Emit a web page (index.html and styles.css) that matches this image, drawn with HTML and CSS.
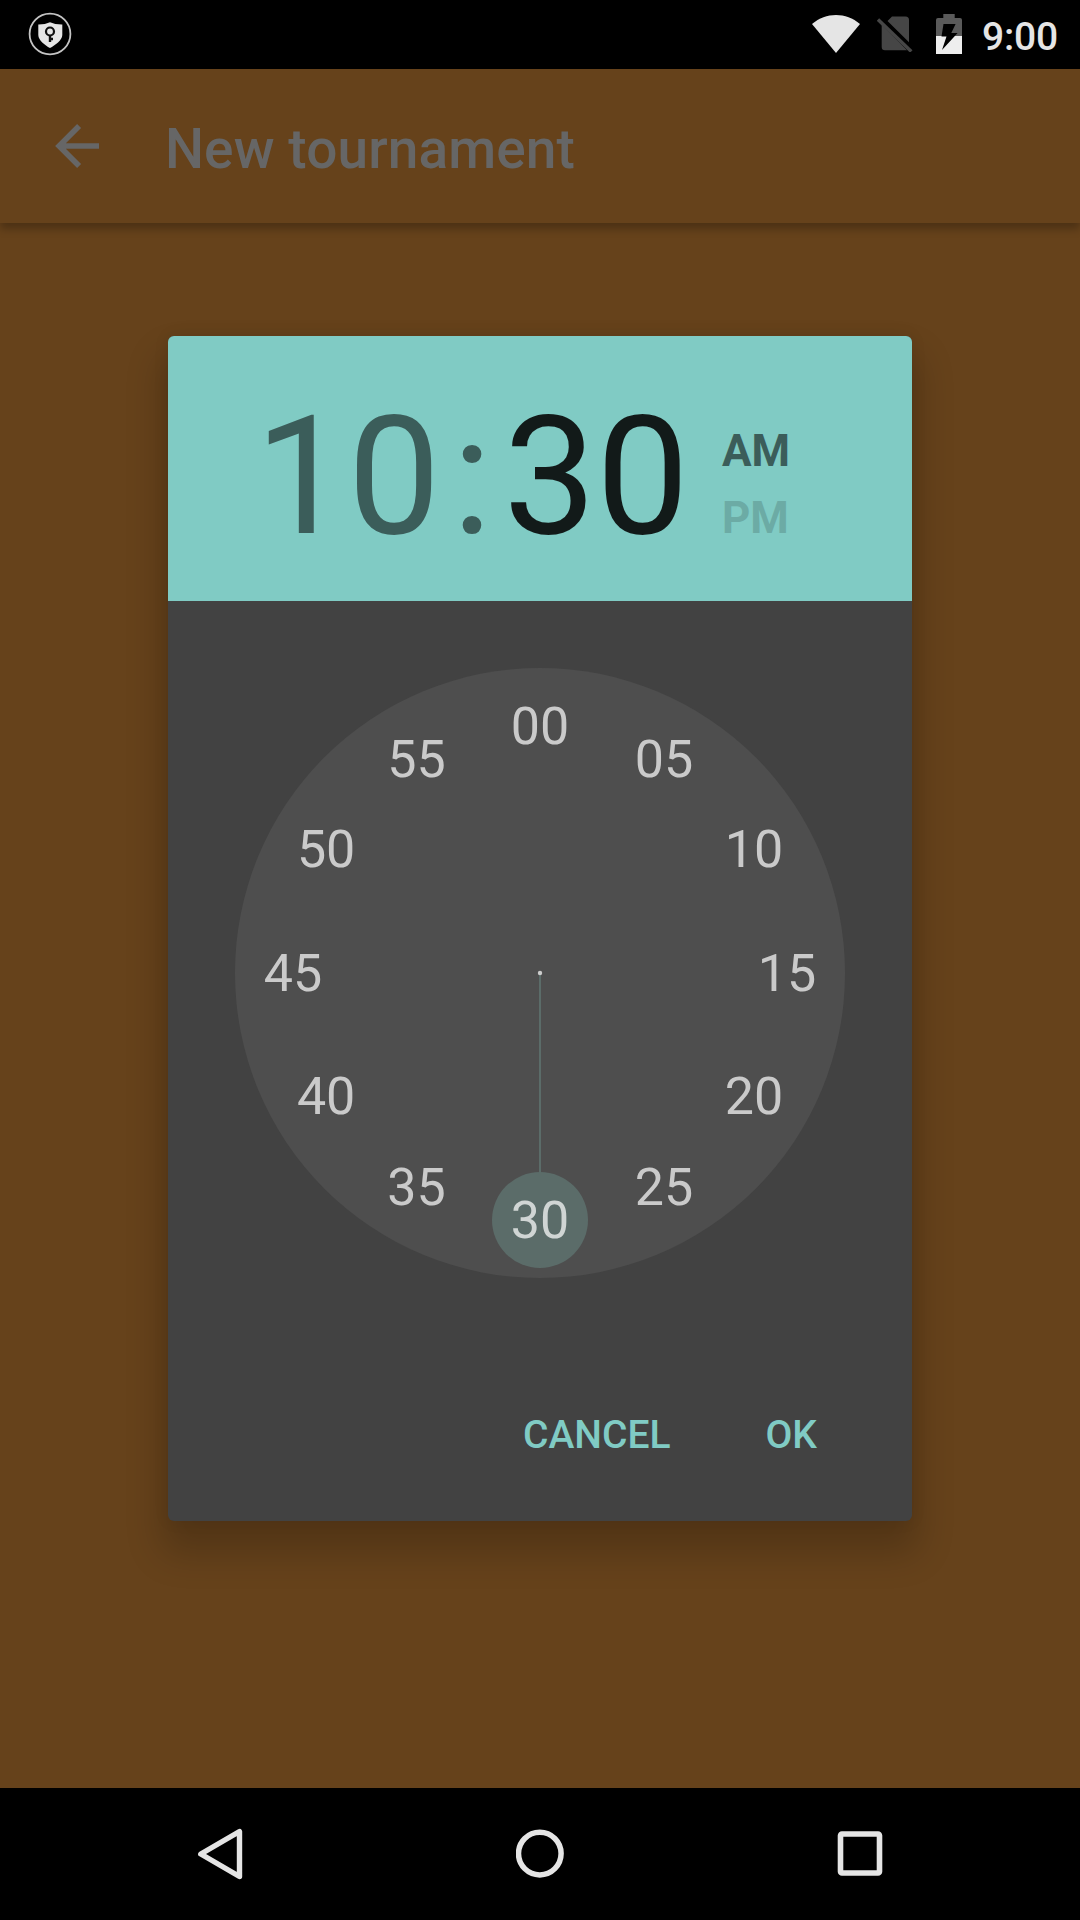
FILE: index.html
```html
<!DOCTYPE html>
<html lang="en">
<head>
<meta charset="utf-8">
<title>New tournament</title>
<link rel="stylesheet" href="styles.css">
</head>
<body>
<div class="screen">
  <header class="status">
    <svg class="vpn" width="44" height="44" viewBox="0 0 44 44">
      <circle cx="22" cy="22" r="20.4" fill="none" stroke="#c4c4c4" stroke-width="1.8"/>
      <path d="M10.3 12.6Q17 12.7 22 10.3Q27 12.7 34.3 12.6V23C34.3 28 27 33.500 22 36C17 33.500 10.300 28 10.300 23Z" fill="#e6e6e6"/>
      <circle cx="22" cy="19.500" r="4" fill="none" stroke="#111" stroke-width="2.200"/>
      <path d="M22 23V30M22 27H25" fill="none" stroke="#111" stroke-width="2.400"/>
    </svg>
    <div class="status-right">
      <svg class="wifi" width="48" height="38" viewBox="0 0 48 38"><path d="M0 9C14-3 34-3 48 9L24 38Z" fill="#e5e5e5"/></svg>
      <svg class="sim" width="36" height="36" viewBox="0 0 36 36">
        <path d="M10.500 5L15 .500H28.500Q32 .500 32 4V26.200ZM4.700 8.500L30 34.200H8Q4.700 34.200 4.700 31Z" fill="#464646"/>
        <path d="M1 3.500L34.300 35.500" stroke="#464646" stroke-width="3.400"/>
      </svg>
      <svg class="battery" width="26" height="40" viewBox="0 0 26 40">
        <path d="M0 6Q0 4 2 4H7.300V0H18.700V4H24Q26 4 26 6V22H0Z" fill="#5a5a5a"/>
        <path d="M0 22H26V40H0Z" fill="#eee"/>
        <path d="M7.500 10H19.600L15.300 19H21.600L6 36L10.500 22.500H5.500Z" fill="#000"/>
      </svg>
      <span class="clock">9:00</span>
    </div>
  </header>

  <div class="appbar">
    <svg class="back" width="44" height="44" viewBox="0 0 44 44"><path d="M44 22H4.300M24.100 2L4.100 22L24.100 42" fill="none" stroke="#666" stroke-width="5.600"/></svg>
    <h1 class="title">New tournament</h1>
  </div>

  <main class="content">
    <section class="dialog">
      <div class="time">
        <div class="digits"><span>10</span><span class="colon">:</span><span class="active">30</span></div>
        <div class="ampm"><span>AM</span><span class="off">PM</span></div>
      </div>
      <svg class="dial" width="610" height="610" viewBox="-305 -305 610 610">
        <circle r="305" fill="#4e4e4e"/>
        <path d="M0 0V199" stroke="#5b6c69" stroke-width="2"/>
        <circle cy="247" r="48" fill="#5b6c69"/>
        <circle r="2.200" fill="#ccc"/>
        <g class="minutes">
          <text x="0" y="-229.500">00</text>
          <text x="124" y="-196.400">05</text>
          <text x="213.900" y="-106">10</text>
          <text x="247" y="17.500">15</text>
          <text x="213.900" y="141">20</text>
          <text x="124" y="232">25</text>
          <text x="0" y="264.500" class="selected">30</text>
          <text x="-123.500" y="232">35</text>
          <text x="-213.900" y="141">40</text>
          <text x="-247" y="17.500">45</text>
          <text x="-213.900" y="-106">50</text>
          <text x="-123.500" y="-196.400">55</text>
        </g>
      </svg>
      <div class="actions"><button>CANCEL</button><button>OK</button></div>
    </section>
  </main>

  <nav class="navbar">
    <svg width="48" height="54" viewBox="0 0 48 54"><path d="M43.500 4.500V49.500L4.800 27Z" fill="none" stroke="#e5e5e5" stroke-width="5.400" stroke-linejoin="round"/></svg>
    <svg width="50" height="50" viewBox="0 0 50 50"><circle cx="23.800" cy="24.600" r="21.300" fill="none" stroke="#e5e5e5" stroke-width="5.500"/></svg>
    <svg width="46" height="46" viewBox="0 0 46 46"><rect x="3.500" y="3" width="39" height="39" rx="1.500" fill="none" stroke="#e5e5e5" stroke-width="5.600"/></svg>
  </nav>
</div>
</body>
</html>
```
FILE: styles.css
```css
* { box-sizing: border-box; }
body { margin: 0; background: #66421b; font-family: Roboto, sans-serif; }
.screen { width: 1080px; height: 1920px; display: flex; flex-direction: column; overflow: hidden; }

.status { height: 69px; flex: none; background: #000; display: flex; justify-content: space-between; padding: 12px 22px 0 28px; }
.status-right { display: flex; align-items: flex-start; }
.wifi { margin: 3px 17px 0 0; }
.sim { margin: 4px 23px 0 0; }
.battery { margin: 2px 20px 0 0; }
.clock { color: #e5e5e5; font-size: 39px; font-weight: 500; line-height: 46px; letter-spacing: -.2px; margin: 2px 0 0; }

.appbar { height: 154px; flex: none; display: flex; align-items: center; padding-left: 55px; box-shadow: 0 6px 8px rgba(0, 0, 0, .25); }
.title { margin: 6px 0 0 66px; font-size: 55px; font-weight: 500; line-height: 64px; letter-spacing: .1px; color: #666; }

.content { flex: 1; padding-top: 113px; display: flex; justify-content: center; align-items: flex-start; }
.dialog { width: 744px; height: 1185px; background: #424242; border-radius: 6px; display: flex; flex-direction: column; align-items: center; box-shadow: 0 26px 36px 7px rgba(0, 0, 0, .19), 0 0 16px rgba(0, 0, 0, .08); }
.time { width: 100%; height: 265px; flex: none; background: #80cbc4; border-radius: 6px 6px 0 0; display: flex; padding: 44px 0 0 87px; color: #3b5d5a; }
.digits { display: flex; font-size: 165px; line-height: 194px; }
.colon { margin: 0 11.5px 0 11.5px; }
.active { color: #121a19; }
.ampm { display: flex; flex-direction: column; margin: 45px 0 0 33px; font-size: 44px; font-weight: 700; line-height: 52px; gap: 15px; }
.off { color: #6caba5; }
.dial { margin-top: 67px; flex: none; }
.minutes { font-size: 52px; fill: #cacaca; text-anchor: middle; }
.selected { fill: #d0d5d4; }
.actions { align-self: stretch; display: flex; justify-content: flex-end; gap: 95px; padding: 134px 95px 0 0; }
.actions button { border: 0; padding: 0; background: none; color: #80cbc4; font: 500 39px/46px Roboto, sans-serif; }

.navbar { height: 132px; flex: none; background: #000; display: flex; justify-content: space-between; align-items: center; padding: 0 197px 0 196px; }
```
